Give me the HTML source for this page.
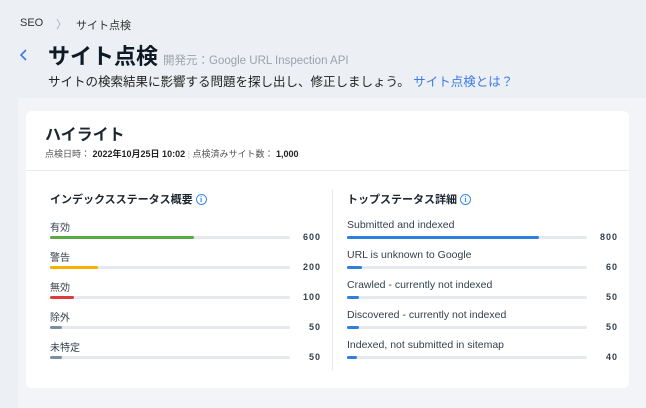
<!DOCTYPE html>
<html><head><meta charset="utf-8"><style>
*{margin:0;padding:0;box-sizing:border-box}
body{width:646px;height:408px;background:#eceff3;font-family:"Liberation Sans","Noto Sans CJK JP",sans-serif;position:relative;overflow:hidden;color:#162d3d}
.a{position:absolute;white-space:nowrap}
.panel{position:absolute;left:18px;top:98px;width:628px;height:310px;background:#f2f4f7}
.card{position:absolute;left:26px;top:111px;width:603px;height:277px;background:#fff;border-radius:6px}
.track{position:absolute;height:3px;background:#e5e8ec;border-radius:2px}
.fill{position:absolute;left:0;top:0;height:3px;border-radius:2px}
.lbl{font-size:10px;color:#32404d}
.rl{font-size:10.5px}
.num{font-size:9px;font-weight:bold;letter-spacing:1px;text-align:right;width:40px;color:#32404d}
.info{display:inline-block;width:11px;height:11px;border:1px solid #3b8be8;border-radius:50%;color:#3b8be8;font-size:8px;text-align:center;line-height:9px;font-weight:bold;vertical-align:1px;margin-left:3px;font-family:"Liberation Serif",serif}
</style></head><body>
<div class="a" style="left:20px;top:17px;font-size:11px;color:#333">SEO</div>
<div class="a" style="left:56px;top:16px;font-size:11px;color:#aab">〉</div>
<div class="a" style="left:76px;top:17px;font-size:11px;color:#333">サイト点検</div>
<svg class="a" style="left:19px;top:49px" width="10" height="12"><path d="M7 1L2 6l5 5" stroke="#3b7be8" stroke-width="1.6" fill="none"/></svg>
<div class="a" style="left:48px;top:39px;font-size:22px;font-weight:bold;color:#0e1a26">サイト点検</div>
<div class="a" style="left:163px;top:52px;font-size:11.5px;color:#9aa3ad">開発元：Google URL Inspection API</div>
<div class="a" style="left:48px;top:71px;font-size:12.5px;color:#222">サイトの検索結果に影響する問題を探し出し、修正しましょう。 <span style="color:#3b7be8">サイト点検とは？</span></div>
<div class="panel"></div>
<div class="card"></div>
<div class="a" style="left:45px;top:121px;font-size:16px;font-weight:bold;color:#1d2630">ハイライト</div>
<div class="a" style="left:45px;top:147px;font-size:9px;color:#555">点検日時： <b style="color:#222">2022年10月25日 10:02</b> <span style="color:#ccc">|</span> 点検済みサイト数： <b style="color:#222">1,000</b></div>
<div class="a" style="left:26px;top:170px;width:603px;height:1px;background:#e8ebee"></div>
<div class="a" style="left:332px;top:190px;width:1px;height:180px;background:#e5e8ec"></div>
<div class="a" style="left:50px;top:191px;font-size:11px;font-weight:bold;color:#1d2630">インデックスステータス概要<span class="info">i</span></div>
<div class="a" style="left:347px;top:191px;font-size:11px;font-weight:bold;color:#1d2630">トップステータス詳細<span class="info">i</span></div>

<div class="a lbl" style="left:50px;top:219px">有効</div>
<div class="track" style="left:50px;top:236px;width:240px"><div class="fill" style="width:144px;background:#5aa846"></div></div>
<div class="a num" style="left:281px;top:232px">600</div>
<div class="a lbl" style="left:50px;top:249px">警告</div>
<div class="track" style="left:50px;top:266px;width:240px"><div class="fill" style="width:48px;background:#fbad00"></div></div>
<div class="a num" style="left:281px;top:262px">200</div>
<div class="a lbl" style="left:50px;top:279px">無効</div>
<div class="track" style="left:50px;top:296px;width:240px"><div class="fill" style="width:24px;background:#de3b3b"></div></div>
<div class="a num" style="left:281px;top:292px">100</div>
<div class="a lbl" style="left:50px;top:309px">除外</div>
<div class="track" style="left:50px;top:326px;width:240px"><div class="fill" style="width:12px;background:#7a8fa3"></div></div>
<div class="a num" style="left:281px;top:322px">50</div>
<div class="a lbl" style="left:50px;top:339px">未特定</div>
<div class="track" style="left:50px;top:356px;width:240px"><div class="fill" style="width:12px;background:#7a8fa3"></div></div>
<div class="a num" style="left:281px;top:352px">50</div>

<div class="a lbl rl" style="left:347px;top:219px">Submitted and indexed</div>
<div class="track" style="left:347px;top:236px;width:240px"><div class="fill" style="width:192px;background:#2f7fdc"></div></div>
<div class="a num" style="left:578px;top:232px">800</div>
<div class="a lbl rl" style="left:347px;top:249px">URL is unknown to Google</div>
<div class="track" style="left:347px;top:266px;width:240px"><div class="fill" style="width:15px;background:#2f7fdc"></div></div>
<div class="a num" style="left:578px;top:262px">60</div>
<div class="a lbl rl" style="left:347px;top:279px">Crawled - currently not indexed</div>
<div class="track" style="left:347px;top:296px;width:240px"><div class="fill" style="width:12px;background:#2f7fdc"></div></div>
<div class="a num" style="left:578px;top:292px">50</div>
<div class="a lbl rl" style="left:347px;top:309px">Discovered - currently not indexed</div>
<div class="track" style="left:347px;top:326px;width:240px"><div class="fill" style="width:12px;background:#2f7fdc"></div></div>
<div class="a num" style="left:578px;top:322px">50</div>
<div class="a lbl rl" style="left:347px;top:339px">Indexed, not submitted in sitemap</div>
<div class="track" style="left:347px;top:356px;width:240px"><div class="fill" style="width:10px;background:#2f7fdc"></div></div>
<div class="a num" style="left:578px;top:352px">40</div>
</body></html>
